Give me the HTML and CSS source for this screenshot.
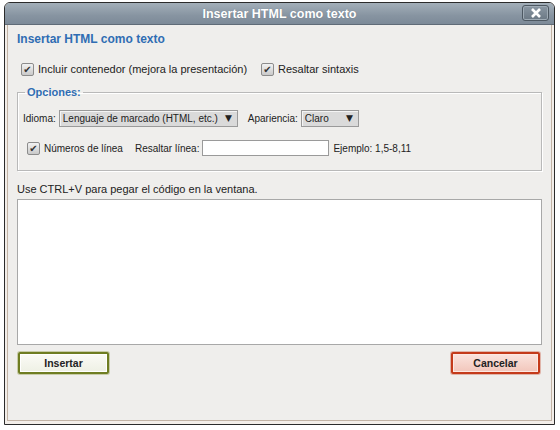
FILE: index.html
```html
<!DOCTYPE html>
<html lang="es">
<head>
<meta charset="utf-8">
<title>Insertar HTML como texto</title>
<link rel="stylesheet" href="styles.css">
</head>
<body>
<div class="dialog">
  <div class="titlebar">
    <span class="title">Insertar HTML como texto</span>
    <span class="close"><svg width="12" height="10" viewBox="0 0 12 10"><path d="M2 1 L10 9 M10 1 L2 9" stroke="#fff" stroke-width="2.6" stroke-linecap="butt"/></svg></span>
  </div>
  <div class="panel">
    <h1 class="heading">Insertar HTML como texto</h1>
    <div class="row top-opts">
      <label class="check first"><span class="box">✔</span>Incluir contenedor (mejora la presentación)</label>
      <label class="check"><span class="box">✔</span>Resaltar sintaxis</label>
    </div>
    <fieldset class="options">
      <legend>Opciones:</legend>
      <div class="row opt-row row1">
        <span class="lbl">Idioma:</span>
        <span class="select sel-lang">Lenguaje de marcado (HTML, etc.)<span class="arrow">▼</span></span>
        <span class="lbl lbl-ap">Apariencia:</span>
        <span class="select sel-ap">Claro<span class="arrow">▼</span></span>
      </div>
      <div class="row opt-row row2">
        <label class="check small"><span class="box">✔</span>Números de línea</label>
        <span class="lbl lbl-hl">Resaltar línea:</span>
        <span class="input"></span>
        <span class="lbl">Ejemplo: 1,5-8,11</span>
      </div>
    </fieldset>
    <p class="hint">Use CTRL+V para pegar el código en la ventana.</p>
    <div class="textarea"></div>
    <div class="buttons">
      <span class="btn btn-ok">Insertar</span>
      <span class="btn btn-cancel">Cancelar</span>
    </div>
  </div>
</div>
</body>
</html>
```
FILE: styles.css
```css
html, body {
  margin: 0;
  padding: 0;
  background: #ffffff;
}
body {
  padding: 2px 4px 0 4px;
  font-family: "Liberation Sans", Arial, sans-serif;
  color: #222;
}
.dialog {
  width: 549px;
  height: 421px;
  border: 1px solid #2b2b2b;
  border-radius: 6px 6px 0 0;
  background: #f3eee9;
  display: flex;
  flex-direction: column;
  overflow: hidden;
}
.titlebar {
  height: 21px;
  flex: none;
  background: linear-gradient(#a3afb9, #8794a1 60%, #7c8a98);
  border-bottom: 1px solid #5f6b77;
  display: flex;
  align-items: center;
  justify-content: center;
  position: relative;
}
.title {
  color: #fff;
  font-weight: bold;
  font-size: 12.5px;
  text-shadow: 0 0 1px #6a7785;
}
.close {
  position: absolute;
  right: 5px;
  top: 2px;
  width: 25px;
  height: 14px;
  border: 1px solid #4d5862;
  border-radius: 3px;
  background: linear-gradient(#8a97a3, #6b7884);
  box-shadow: inset 0 0 0 1px #9fabb5;
  display: flex;
  align-items: center;
  justify-content: center;
}
.panel {
  flex: 1;
  margin: 0 2px 3px 2px;
  border: 1px solid #c2b3a5;
  border-top: none;
  background: #efeeec;
  padding: 0 9px 0 9px;
  display: flex;
  flex-direction: column;
}
.heading {
  margin: 6px 0 0 0;
  font-size: 12px;
  font-weight: bold;
  color: #2f6db3;
  height: 16px;
  line-height: 16px;
}
.row {
  display: flex;
  align-items: center;
  white-space: nowrap;
}
.top-opts {
  margin-top: 14px;
  padding-left: 4px;
  font-size: 11px;
  height: 16px;
}
.check {
  display: flex;
  align-items: center;
}
.check.first {
  width: 240px;
}
.box {
  width: 11px;
  height: 11px;
  border: 1px solid #8c8c8c;
  border-radius: 2px;
  background: linear-gradient(#f2f2f2, #c9c9c9);
  color: #333;
  font-size: 10px;
  line-height: 11px;
  text-align: center;
  margin-right: 4px;
  font-family: "DejaVu Sans", sans-serif;
}
.options {
  margin: 9px 0 0 0;
  padding: 0 5px 13px 5px;
  border: 1px solid #b9b9b9;
  box-shadow: 1px 1px 0 #fff, inset 1px 1px 0 #fff;
}
.options legend {
  font-size: 11px;
  font-weight: bold;
  color: #2f6db3;
  padding: 0 2px;
  margin-left: 2px;
}
.opt-row {
  font-size: 10px;
  height: 18px;
}
.row1 {
  margin-top: 11px;
}
.select {
  display: flex;
  align-items: center;
  height: 17px;
  border: 1px solid #9a9a9a;
  background: #dadada;
  box-shadow: inset 1px 1px 0 #f4f4f4;
  padding: 0 4px 0 3px;
  margin-left: 3px;
  font-size: 10px;
  justify-content: space-between;
  box-sizing: border-box;
  white-space: nowrap;
}
.arrow {
  font-size: 9px;
  font-family: "DejaVu Sans", sans-serif;
  margin-left: 6px;
  margin-right: 1px;
}
.sel-lang { width: 179px; }
.sel-ap { width: 58px; }
.lbl-ap { margin-left: 10px; }
.row2 {
  margin-top: 12px;
  padding-left: 4px;
}
.check.small { font-size: 10px; }
.check.small .box { margin-right: 4px; }
.lbl-hl { margin-left: 12px; }
.input {
  width: 125px;
  height: 14px;
  border: 1px solid #9a9a9a;
  background: #fff;
  margin: 0 4px 0 3px;
}
.hint {
  margin: 11px 0 0 0;
  font-size: 11px;
  height: 14px;
  line-height: 14px;
}
.textarea {
  margin-top: 3px;
  height: 144px;
  border: 1px solid #a8a8a8;
  background: #fff;
}
.buttons {
  margin-top: 7px;
  display: flex;
  justify-content: space-between;
  padding-left: 1px;
  padding-right: 2px;
}
.btn {
  height: 18px;
  line-height: 18px;
  font-size: 10.5px;
  font-weight: bold;
  text-align: center;
  border-radius: 2px;
  color: #222;
}
.btn-ok {
  width: 87px;
  border: 2px solid #6f7d22;
  background: linear-gradient(#fbfbf6, #eef0e4);
  box-shadow: 0 0 0 1px #c8cca8, inset 0 0 0 1px #fff;
}
.btn-cancel {
  width: 85px;
  border: 2px solid #c43a1a;
  background: linear-gradient(#fbe4de, #f2c6bb);
  box-shadow: 0 0 0 1px #e0b5aa, inset 0 0 0 1px #fde8e2;
}
```
